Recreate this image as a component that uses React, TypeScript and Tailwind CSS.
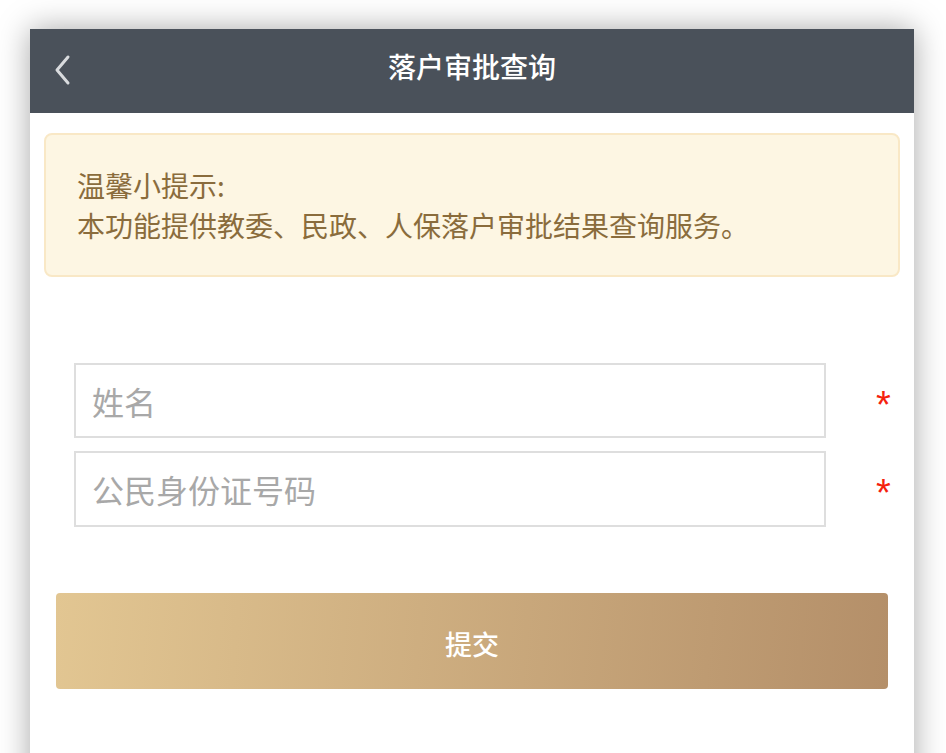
import React from "react";

export default function App() {
  const font = { fontFamily: '"Noto Sans CJK SC", "Noto Sans", sans-serif' };
  return (
    <div className="min-h-[753px] bg-white pt-[29px] pl-[30px] overflow-hidden" style={font}>
      <div className="w-[884px] min-h-[760px] bg-white shadow-[0_0_30px_rgba(0,0,0,0.35)]">
        <div className="relative flex h-[84px] items-center justify-center bg-[#4a515a] pb-[10px]">
          <svg className="absolute left-[23px] top-[25px]" width="20" height="32" viewBox="0 0 20 32">
            <path d="M15 3 L4 16 L15 29" fill="none" stroke="#d9dbde" strokeWidth="3" strokeLinecap="round" strokeLinejoin="round" />
          </svg>
          <span className="text-[28px] font-medium leading-none text-white">落户审批查询</span>
        </div>
        <div className="px-[14px] pt-[20px]">
          <div className="rounded-[8px] border-2 border-[#f9e8c6] bg-[#fdf6e3] pl-[31px] pr-[20px] pt-[30px] pb-[30px] text-[28px] leading-[40px] text-[#8a6c3c]">
            <div>温馨小提示:</div>
            <div>本功能提供教委、民政、人保落户审批结果查询服务。</div>
          </div>
        </div>
        <div className="mt-[86px] flex flex-col gap-[13px] pl-[44px]">
          <div className="flex items-center">
            <div className="flex h-[75px] w-[752px] items-center border-2 border-[#dedede] px-[16px] text-[32px] text-[#a8a8a8]">姓名</div>
            <span className="ml-[50px] mt-[8px] text-[38px] leading-none text-[#f5220d]" style={{ fontFamily: '"Liberation Sans", sans-serif' }}>*</span>
          </div>
          <div className="flex items-center">
            <div className="flex h-[76px] w-[752px] items-center border-2 border-[#dedede] px-[16px] text-[32px] text-[#a8a8a8]">公民身份证号码</div>
            <span className="ml-[50px] mt-[8px] text-[38px] leading-none text-[#f5220d]" style={{ fontFamily: '"Liberation Sans", sans-serif' }}>*</span>
          </div>
        </div>
        <div className="mt-[66px] px-[26px]">
          <div className="flex h-[96px] items-center justify-center rounded-[4px] bg-[linear-gradient(95deg,#e2c692,#b48f69)] pt-[6px] text-[27px] font-medium text-white">
            提交
          </div>
        </div>
      </div>
    </div>
  );
}
